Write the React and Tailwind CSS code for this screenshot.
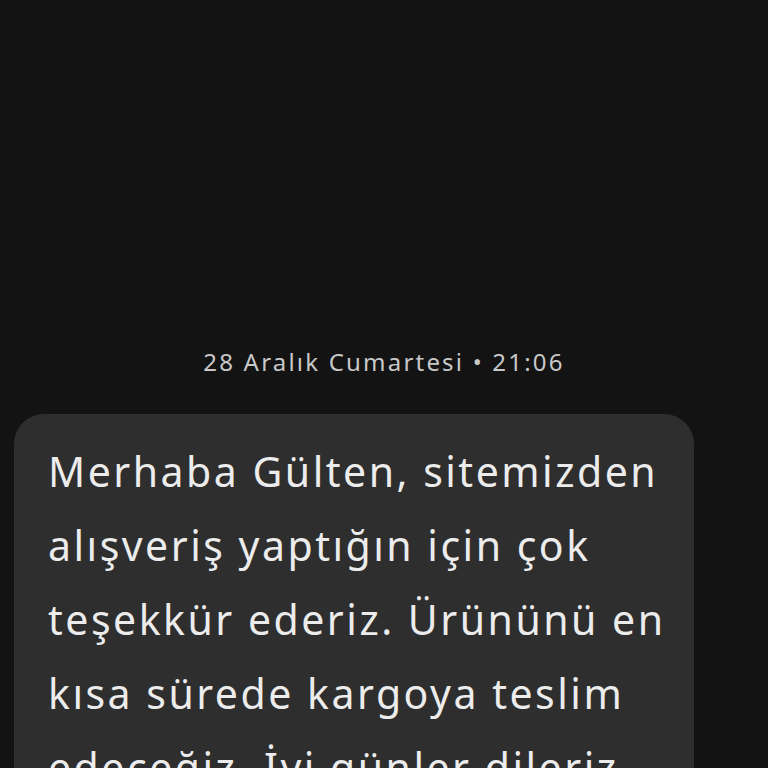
import React from 'react';

const lines = [
    'Merhaba Gülten, sitemizden',
    'alışveriş yaptığın için çok',
    'teşekkür ederiz. Ürününü en',
    'kısa sürede kargoya teslim',
    'edeceğiz. İyi günler dileriz.',
];

const App = () => {
    return (
        <div className="h-[768px] overflow-hidden bg-[#131313]" style={{ fontFamily: '"Noto Sans", Roboto, sans-serif' }}>
            <div className="pt-[344px]">
                <div className="text-center text-[24px] leading-[36px] tracking-[2.2px] text-[#c8c8c8]">28 Aralık Cumartesi • 21:06</div>
                <div className="mt-[34px] ml-[14px] w-[680px] rounded-[30px] bg-[#2e2e2e] pl-[34px] pr-[10px] pt-[20px] pb-[24px]">
                    <p className="whitespace-nowrap text-[41px] leading-[74px] tracking-[2.5px] text-[#ececec]">
                        {lines.map((l, i) => (
                            <span key={i} className="block">{l}</span>
                        ))}
                    </p>
                </div>
            </div>
        </div>
    );
};

export default App;
